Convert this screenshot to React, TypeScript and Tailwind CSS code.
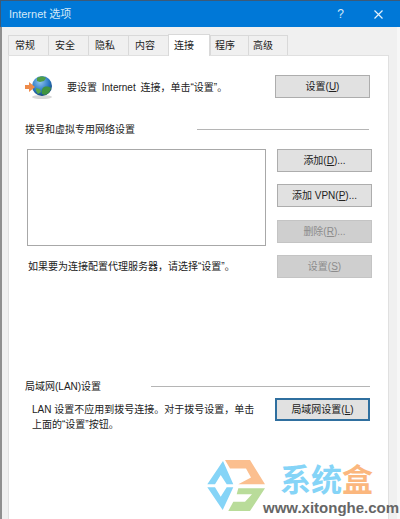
import React from "react";

const font = { fontFamily: '"Liberation Sans", "Noto Sans CJK SC", sans-serif' };

const tabs = [
  { label: "常规", cls: "w-[41px] pl-[6px]" },
  { label: "安全", cls: "w-[41px] pl-[6px]" },
  { label: "隐私", cls: "w-[41px] pl-[6px]" },
  { label: "内容", cls: "w-[41px] pl-[6px]" },
  { label: "连接", cls: "" },
  { label: "程序", cls: "w-[39px] pl-[4px]" },
  { label: "高级", cls: "w-[40px] pl-[4px]" },
];

const Btn: React.FC<{
  children: React.ReactNode;
  disabled?: boolean;
  focus?: boolean;
  className?: string;
}> = ({ children, disabled, focus, className }) => (
  <div
    className={`h-[23px] w-[95px] shrink-0 flex items-center justify-center text-[10px] ${
      focus
        ? "border-2 border-[#2f6f9f] bg-[#e1e1e1] text-[#222]"
        : disabled
        ? "border border-[#c4c4c4] bg-[#cfcfcf] text-[#8c8c8c]"
        : "border border-[#adadad] bg-[#e1e1e1] text-[#222]"
    } ${className ?? ""}`}
  >
    {children}
  </div>
);

const Globe = () => (
  <svg width="30" height="26" viewBox="0 0 30 26" className="shrink-0">
    <defs>
      <radialGradient id="g" cx="40%" cy="30%" r="75%">
        <stop offset="0%" stopColor="#8fc4ee" />
        <stop offset="60%" stopColor="#2a78c4" />
        <stop offset="100%" stopColor="#12406f" />
      </radialGradient>
    </defs>
    <ellipse cx="17" cy="23" rx="10" ry="2" fill="#d8d8d8" />
    <circle cx="17" cy="12" r="10" fill="url(#g)" />
    <path d="M12 4c3-2 7-2 9 0l-2 3-4 1-3-1z" fill="#4f9e45" />
    <path d="M19 13c3-1 6 0 7 1-1 4-3 6-6 7l-3-1c-1-3 0-6 2-7z" fill="#3f9440" />
    <path d="M11 14l4 1 1 3-3 2-2-3z" fill="#5aa84c" />
    <path d="M0 11h4V8l6 5-6 5v-3H0z" fill="#ee8b4a" />
  </svg>
);

const Logo = () => (
  <svg width="58" height="53" viewBox="0 0 58 53" className="shrink-0">
    <path d="M.3 25.3 16 2 26.3 25.3H19.7L13.7 16 8 25.3z" fill="#85d4f7" />
    <path d="M.3 28.3H8L13.7 37.7 19.7 28.3H26.3L15.7 51z" fill="#85d4f7" />
    <path d="M18 1H43L58 25.3H31.3L44 18.5 39 9.5H23z" fill="#fbbf8f" />
    <path d="M58 29.3 43 52H21.3L26.3 42.7H38L45 35.3H29.7L31.3 29.3z" fill="#b9dc9a" />
  </svg>
);

export default function App() {
  return (
    <div style={font} className="relative w-[400px] h-[519px] overflow-hidden bg-white flex flex-col">
      <div className="h-[27px] shrink-0 bg-[#0078d7] border-t border-l border-[#3c5a78] flex items-center pl-[8px] pr-[17px] text-white">
        <span className="text-[11px] text-[#d5e9f8]">Internet 选项</span>
        <span className="ml-auto text-[12px] text-[#d5e9f8]">?</span>
        <svg width="9" height="9" viewBox="0 0 9 9" className="ml-[30px]">
          <path d="M.5.5l8 8M8.5.5l-8 8" stroke="#e4f1fb" strokeWidth="1.2" />
        </svg>
      </div>

      <div className="flex-1 flex flex-col bg-[#f0f0f0] border-l-2 border-r-[3px] border-l-[#8f8f8f] border-r-[#f7f7f7] pl-[6px] pr-[8px]">
        <div className="h-[28px] flex items-end shrink-0">
          {tabs.map((t) => (
            <div
              key={t.label}
              className={
                t.label === "连接"
                  ? "w-[42px] h-[22px] -mb-px z-10 bg-white border border-b-0 border-[#d9d9d9] flex items-center pl-[5px] text-[10px] text-[#222]"
                  : `h-[20px] border border-b-0 border-[#d9d9d9] -mr-px flex items-center text-[10px] text-[#222] ${t.cls}`
              }
            >
              {t.label}
            </div>
          ))}
        </div>

        <div className="flex-1 bg-white border border-b-0 border-[#e0e0e0] pl-[16px] pr-[16px] pt-[19px] text-[10px] text-[#222]">
          <div className="flex items-center h-[23px]">
            <Globe />
            <span className="ml-[12px] pt-[2px] [word-spacing:2px]">要设置 Internet 连接，单击“设置”。</span>
            <Btn className="ml-auto mr-[2px]">设置(<u>U</u>)</Btn>
          </div>

          <div className="mt-[23px] h-[16px] flex items-center">
            <span>拨号和虚拟专用网络设置</span>
            <div className="ml-[62px] mr-[3px] flex-1 h-px bg-[#b5b5b5]" />
          </div>

          <div className="mt-[12px] flex justify-between">
            <div className="w-[239px] ml-[2px]">
              <div className="h-[97px] border border-[#a8a8a8] bg-white" />
              <div className="mt-[13px] ml-[1px] leading-[16px]">如果要为连接配置代理服务器，请选择“设置”。</div>
            </div>
            <div className="flex flex-col gap-[12px]">
              <Btn>添加(<u>D</u>)...</Btn>
              <Btn>添加 VPN(<u>P</u>)...</Btn>
              <Btn disabled className="mt-px">删除(<u>R</u>)...</Btn>
              <Btn disabled>设置(<u>S</u>)</Btn>
            </div>
          </div>

          <div className="mt-[100px] h-[16px] flex items-center">
            <span>局域网(LAN)设置</span>
            <div className="ml-[50px] mr-[2px] flex-1 h-px bg-[#b5b5b5]" />
          </div>

          <div className="mt-[4px] flex justify-between">
            <div className="ml-[7px] mt-[4px] leading-[15px]">
              <div>LAN 设置不应用到拨号连接。对于拨号设置，单击</div>
              <div>上面的“设置”按钮。</div>
            </div>
            <Btn focus className="mr-[2px]">局域网设置(<u>L</u>)</Btn>
          </div>
        </div>
      </div>

      {/* watermark */}
      <div className="absolute left-[207px] top-[459px]">
        <Logo />
      </div>
      <div className="absolute left-[280px] top-[461px] text-[31px] leading-[40px] font-bold text-[#85d4f7] whitespace-nowrap">
        系统<span className="text-[#fbb77e]">盒</span>
      </div>
      <div className="absolute left-[263px] top-[500px] text-[15px] leading-[16px] font-bold text-[#666] whitespace-nowrap">
        www.xitonghe.com
      </div>
    </div>
  );
}
